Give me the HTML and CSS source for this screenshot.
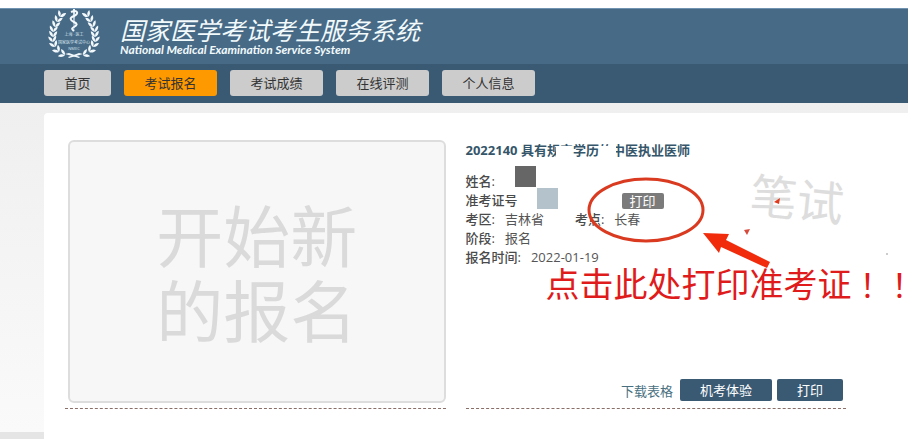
FILE: index.html
```
<!DOCTYPE html>
<html lang="zh-CN">
<head>
    <meta charset="UTF-8">
    <meta name="viewport" content="width=device-width, initial-scale=1.0">
    <title>国家医学考试考生服务系统</title>
    <link rel="stylesheet" href="styles.css">
</head>
<body>

    <header class="header">
        <svg class="logo" width="52" height="50" viewBox="0 0 52 50" aria-hidden="true">
            <defs>
                <path id="leaf" d="M0 0C-3 -1 -4 -3 -4 -6C-1 -5 0 -3 0 0Z"/>
                <g id="pair">
                    <use href="#leaf"/>
                    <use href="#leaf" transform="scale(-1 1)"/>
                </g>
                <g id="branch">
                    <use href="#pair" transform="translate(12 8) rotate(24)"/>
                    <use href="#pair" transform="translate(9 13) rotate(20)"/>
                    <use href="#pair" transform="translate(7 18) rotate(14)"/>
                    <use href="#pair" transform="translate(5 23) rotate(8)"/>
                    <use href="#pair" transform="translate(5 28) rotate(2)"/>
                    <use href="#pair" transform="translate(5 33) rotate(-8)"/>
                    <use href="#pair" transform="translate(7 38) rotate(-22)"/>
                    <use href="#pair" transform="translate(11 43) rotate(-42)"/>
                    <use href="#pair" transform="translate(17 46) rotate(-66)"/>
                    <path d="M17 45L31 49L32 48L21 44Z"/>
                </g>
            </defs>
            <g fill="#f2f8fb">
                <use href="#branch"/>
                <use href="#branch" transform="translate(52 0) scale(-1 1)"/>
                <path d="M25 0h2l-1 24z"/>
            </g>
            <path d="M23 3C30 0 31 5 26 7S22 11 26 13S29 16 26 18S24 20 26 22" fill="none" stroke="#f2f8fb" stroke-width="2"/>
            <g fill="#d5e3ec" text-anchor="middle">
                <text x="26" y="27" font-size="4">上海 · 医工</text>
                <text x="26" y="35" font-size="4">国家医学考试中心</text>
                <text x="26" y="41" font-size="4">NMEC</text>
            </g>
        </svg>
        <div class="brand">
            <h1>国家医学考试考生服务系统</h1>
            <p>National Medical Examination Service System</p>
        </div>
    </header>

    <nav class="nav">
        <a href="#">首页</a>
        <a href="#" class="wide active">考试报名</a>
        <a href="#" class="wide">考试成绩</a>
        <a href="#" class="wide">在线评测</a>
        <a href="#" class="wide">个人信息</a>
    </nav>

    <main class="page">
        <div class="card">
            <section class="column">
                <button class="new-entry">开始新<br>的报名</button>
            </section>

            <section class="column entry">
                <h2>2022140 具有<span class="smudge half">规</span><span class="smudge">定</span>学历<span class="smudge">的</span><span class="smudge left">中</span>医执业医师</h2>
                <ul class="info">
                    <li><b>姓名:</b><i class="block dark"></i></li>
                    <li><b>准考证号</b><i class="block light"></i><button class="mini">打印</button></li>
                    <li><b>考区:</b><span class="area">吉林省</span><b>考点:</b><span>长春</span></li>
                    <li><b>阶段:</b><span>报名</span></li>
                    <li><b>报名时间:</b><span>2022-01-19</span></li>
                </ul>
                <div class="stamp">笔试</div>
                <div class="actions">
                    <a href="#">下载表格</a>
                    <button class="btn">机考体验</button>
                    <button class="btn">打印</button>
                </div>

                <!-- red marks over the entry -->
                <svg class="marks" width="310" height="100" viewBox="0 0 310 100" aria-hidden="true">
                    <ellipse cx="60" cy="40" rx="57" ry="31" fill="none" stroke="#d93a20" stroke-width="3"/>
                    <path d="M117 63L143 64L140 70L184 92L181 98L135 77L133 83Z" fill="#f02c0c"/>
                    <path d="M188 32L194 28L193 34Z" fill="#e03a1c"/>
                    <path d="M158 60L164 59L161 65Z" fill="#d8493c"/>
                    <circle cx="301" cy="84" r="1" fill="#bbb"/>
                </svg>
                <p class="note">点击此处打印准考证<span lang="zh-TW">！！</span></p>
            </section>
        </div>
    </main>

</body>
</html>
```
FILE: styles.css
```
* {
    box-sizing: border-box;
}
body {
    margin: 0;
    padding-top: 8px;
    min-height: 100vh;
    display: flex;
    flex-direction: column;
    overflow: hidden;
    font-family: "Open Sans", "Noto Sans CJK SC", sans-serif;
    font-size: 13px;
    color: #555;
    background: #fff;
}
h1, h2, p, ul {
    margin: 0;
    padding: 0;
}
button {
    font-family: inherit;
    font-size: 13px;
    border: none;
    padding: 0;
    cursor: pointer;
}
a {
    text-decoration: none;
}

/* Header */
.header {
    display: flex;
    gap: 20px;
    height: 56px;
    padding-left: 48px;
    background: #476a87;
    border-top: 1px solid #6f93b0;
}
.logo {
    display: block;
}
.brand {
    color: #f2fafc;
    font-style: italic;
    white-space: nowrap;
}
.brand h1 {
    font-size: 25px;
    font-weight: 400;
    line-height: 26px;
    margin-top: 8px;
}
.brand p {
    font-family: Lato, sans-serif;
    font-size: 12px;
    font-weight: 700;
    line-height: 14px;
}
.nav {
    display: flex;
    gap: 13px;
    padding: 6px 0 7px 44px;
    background: #3a5a74;
}
.nav a {
    width: 67px;
    line-height: 26px;
    text-align: center;
    color: #333;
    background: #ccc;
    border-radius: 3px;
}
.nav .wide {
    width: 93px;
}
.nav .active {
    background: #ff9900;
}

/* Content */
.page {
    flex: 1;
    display: flex;
    padding: 10px 0 0 44px;
    background: linear-gradient(#efefef, #fafafa calc(100% - 7px), #e5e5e5 calc(100% - 7px));
}
.card {
    flex: 1;
    display: grid;
    grid-template-columns: 1fr 1fr;
    gap: 20px;
    align-items: start;
    padding: 27px 62px 30px 21px;
    background: #fff;
    border-top-left-radius: 4px;
}
.column {
    height: 100%;
    min-height: 269px;
    border-bottom: 1px dashed #8a6f68;
}
.new-entry {
    width: calc(100% - 3px);
    height: 263px;
    margin-left: 3px;
    padding-top: 4px;
    font-size: 67px;
    line-height: 75px;
    color: #dadada;
    background: #f7f7f7;
    border: 2px solid #ddd;
    border-radius: 6px;
}
.entry {
    position: relative;
    display: flex;
    flex-direction: column;
}
.entry h2 {
    font-size: 13px;
    line-height: 20px;
    color: #35566a;
    white-space: nowrap;
}
.smudge {
    position: relative;
}
.smudge::after {
    content: "";
    position: absolute;
    left: 0;
    right: 0;
    top: 5px;
    bottom: 0;
    background: #fff;
}
.smudge.half::after {
    left: 9px;
}
.smudge.left::after {
    right: 9px;
    top: 0;
}
.info {
    margin-top: 12px;
    list-style: none;
}
.info li {
    display: flex;
    gap: 10px;
    height: 19px;
    line-height: 19px;
}
.info b {
    font-weight: 500;
    color: #4a4a4a;
}
.area {
    margin-right: 21px;
}
.block {
    width: 21px;
    height: 21px;
}
.dark {
    margin: -6px 0 0 10px;
    background: #666;
}
.light {
    margin: -3px 0 0 9px;
    background: #b4c2cb;
}
.mini {
    width: 42px;
    height: 16px;
    margin: 2px 0 0 54px;
    line-height: 16px;
    color: #fff;
    background: #7b7b7b;
    border-radius: 2px;
}
.stamp {
    position: absolute;
    right: 2px;
    top: 24px;
    font-size: 47px;
    line-height: 70px;
    color: #ddd;
    transform: rotate(6deg);
}
.actions {
    display: flex;
    justify-content: flex-end;
    align-items: center;
    gap: 5px;
    margin-top: auto;
    padding: 0 3px 7px 0;
}
.actions a {
    margin-right: 2px;
    color: #48707f;
}
.btn {
    padding: 0 20px;
    line-height: 22px;
    color: #fff;
    background: #3a5a74;
    border-radius: 2px;
}
.marks {
    position: absolute;
    left: 120px;
    top: 30px;
    pointer-events: none;
}
.note {
    position: absolute;
    left: 80px;
    top: 123px;
    font-size: 34px;
    line-height: 40px;
    white-space: nowrap;
    color: #e01b1b;
}
.note span {
    font-family: "Noto Sans CJK TC", sans-serif;
    font-size: 32px;
}
```
